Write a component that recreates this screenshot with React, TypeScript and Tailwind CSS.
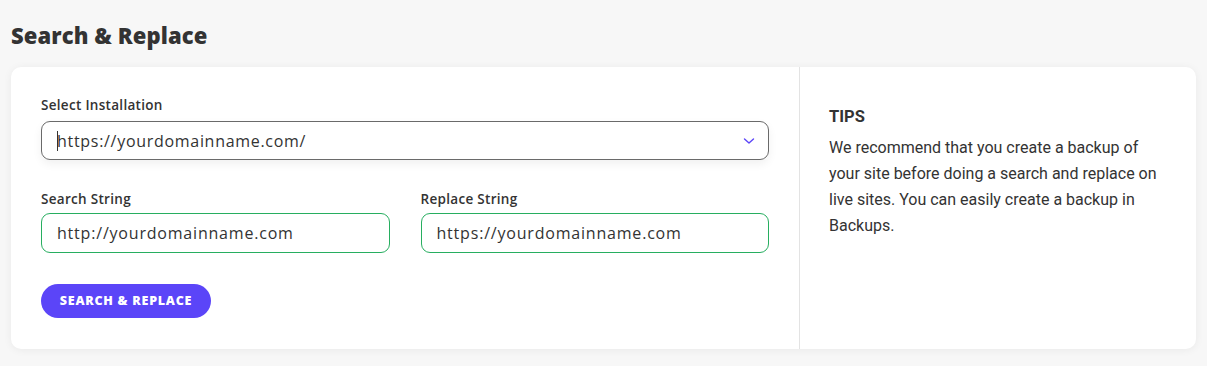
import React from "react";

export default function App() {
  return (
    <div className="min-h-[366px] w-[1207px] bg-[#f7f7f7] px-[11px] pt-[21px] pb-[17px] text-[#333]" style={{ fontFamily: '"Open Sans", sans-serif' }}>
      <h1 className="text-[22px] font-extrabold leading-[29px] tracking-[0.1px] text-[#333]">Search &amp; Replace</h1>
      <div className="mt-[17px] flex h-[282px] rounded-[10px] bg-white shadow-[0_1px_8px_rgba(0,0,0,0.06)]">
        <div className="w-[789px] border-r border-[#e3e3e3] pl-[30px] pr-[30px] pt-[29px]">
          <label className="block text-[13.5px] font-semibold leading-[18px] tracking-[0.3px] text-[#333]">Select Installation</label>
          <div className="mt-[7px] flex h-[39px] items-center justify-between rounded-[9px] border border-[#6a6a6a] pl-[15px] pr-[12px] shadow-[0_4px_10px_rgba(0,0,0,0.06)]">
            <span className="flex items-center text-[16px] tracking-[0.7px] text-[#333]">
              <span className="mr-[-1px] inline-block h-[20px] w-px bg-[#333]" />
              https://yourdomainname.com/
            </span>
            <svg width="12" height="8" viewBox="0 0 12 8" className="mr-[1px]">
              <path d="M1.5 2 L6 6 L10.5 2" fill="none" stroke="#5b45f8" strokeWidth="1.4" strokeLinecap="round" strokeLinejoin="round" />
            </svg>
          </div>
          <div className="mt-[30px] grid grid-cols-2 gap-[31px]">
            <div>
              <label className="block text-[13.5px] font-semibold leading-[18px] tracking-[0.3px] text-[#333]">Search String</label>
              <div className="mt-[5px] flex h-[40px] items-center rounded-[9px] border border-[#27ae60] pl-[15px] text-[16px] tracking-[0.8px] text-[#333]">
                http://yourdomainname.com
              </div>
            </div>
            <div>
              <label className="block text-[13.5px] font-semibold leading-[18px] tracking-[0.3px] text-[#333]">Replace String</label>
              <div className="mt-[5px] flex h-[40px] items-center rounded-[9px] border border-[#27ae60] pl-[15px] text-[16px] tracking-[0.8px] text-[#333]">
                https://yourdomainname.com
              </div>
            </div>
          </div>
          <button className="mt-[31px] h-[34px] w-[170px] rounded-full bg-[#5b45f8] text-[12.5px] font-extrabold tracking-[0.75px] text-white">
            SEARCH &amp; REPLACE
          </button>
        </div>
        <div className="flex-1 pl-[29px] pr-[30px] pt-[39px]" style={{ fontFamily: 'Roboto, sans-serif' }}>
          <h2 className="text-[16.5px] font-bold leading-[22px] text-[#333]">TIPS</h2>
          <p className="mt-[7px] w-[335px] text-[16px] leading-[26px] text-[#333]">
            We recommend that you create a backup of your site before doing a search and replace on live sites. You can easily create a backup in Backups.
          </p>
        </div>
      </div>
    </div>
  );
}
